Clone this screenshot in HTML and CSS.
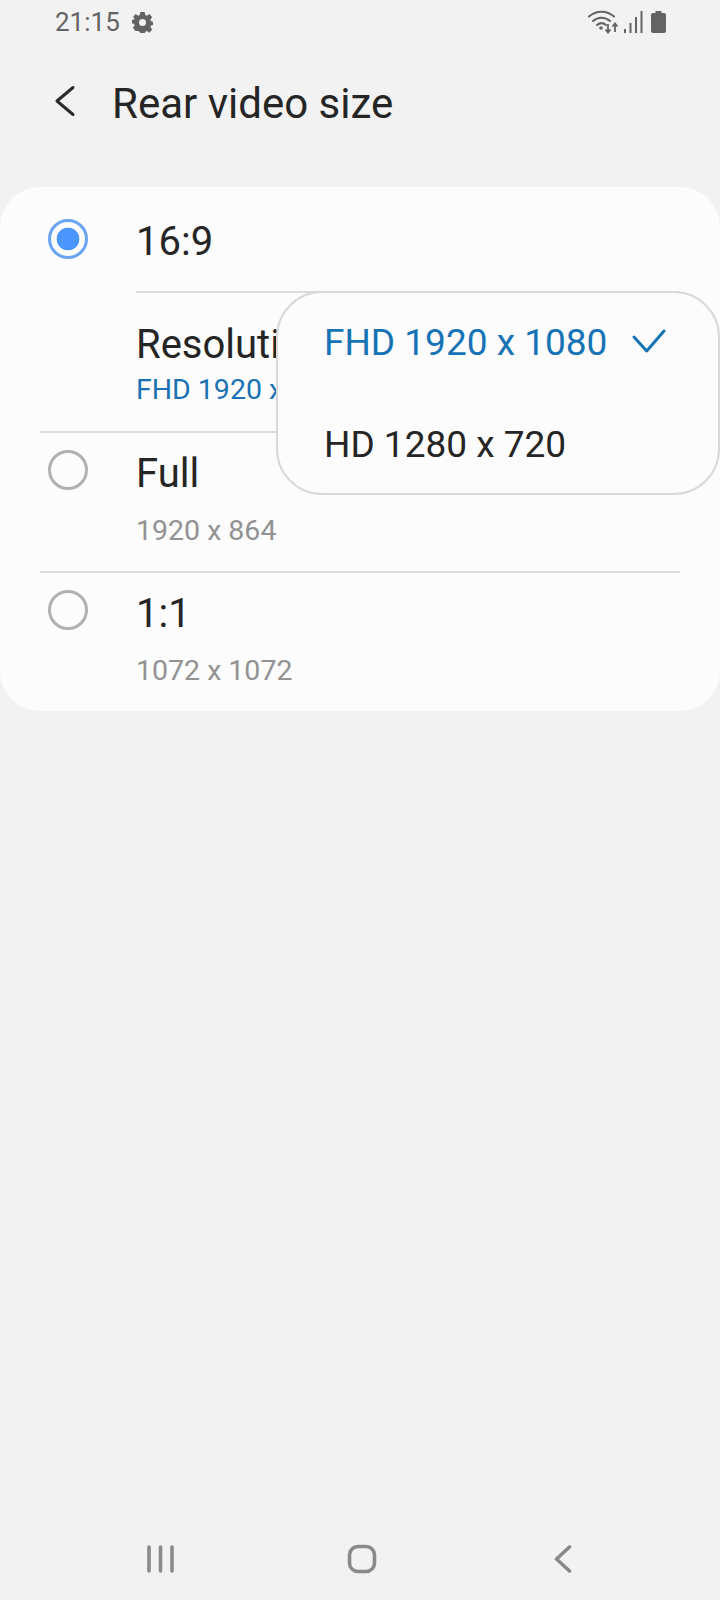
FILE: index.html
```html
<!DOCTYPE html>
<html lang="en">
<head>
<meta charset="utf-8">
<title>Rear video size</title>
<link rel="stylesheet" href="styles.css">
</head>
<body>
<div class="screen">
  <div class="status">
    <div class="status-left">
      <span class="time">21:15</span>
      <svg class="gear" viewBox="0 0 24 24"><path fill="#636363" fill-rule="evenodd" d="M9.500 0h5l.7 3.400 1.900.8L20 2.300 23 6l-2 2.800.8 1.900 2.200.5v3.600l-2.200.5-.8 1.900 2 2.800-3 3.700-2.900-1.900-1.900.8-.7 2.100h-5l-.7-2.100-1.900-.8L4 21.700 1 18l2-2.800-.8-1.900L0 12.800V9.200l2.200-.5.800-1.900L1 6l3-3.700 2.900 1.900 1.900-.8zM12 8a4 4 0 1 0 0 8 4 4 0 0 0 0-8z"/></svg>
    </div>
    <div class="status-right">
      <svg class="wifi" viewBox="0 0 30 24"><g fill="none" stroke="#636363" stroke-width="2" stroke-linecap="round"><path d="M1 6.500C8 0 19 0 26 6.500"/><path d="M5 11c5-4.500 12-4.500 17 0"/><path d="M9 15c3-2.500 6-2.500 9 0"/></g><circle cx="13" cy="18" r="1.800" fill="#636363"/><path stroke="#636363" stroke-width="1.800" fill="none" d="M20 14v8M17.500 19.500l2.500 3 2.500-3M27 22v-8M24.500 16.500l2.500-3 2.500 3"/></svg>
      <svg class="signal" viewBox="0 0 20 24"><g stroke="#636363" stroke-width="2"><path d="M2 23v-4M7.500 23V13M13 23V7M18.500 23V1" /></g></svg>
      <svg class="battery" viewBox="0 0 15 22"><path fill="#636363" d="M4.500 0h6v2H13a2 2 0 0 1 2 2v16a2 2 0 0 1-2 2H2a2 2 0 0 1-2-2V4a2 2 0 0 1 2-2h2.500z"/></svg>
    </div>
  </div>

  <header class="appbar">
    <svg class="back" viewBox="0 0 22 32"><path d="M19 2.500 3 16l16 13.500" fill="none" stroke="#2a2a2a" stroke-width="3" stroke-linecap="round" stroke-linejoin="round"/></svg>
    <h1 class="title">Rear video size</h1>
  </header>

  <main class="card">
    <div class="option option-first">
      <span class="radio radio-on"></span>
      <div class="option-body"><div class="label label-first">16:9</div></div>
    </div>
    <div class="resolution-row">
      <div class="label label-res">Resolution</div>
      <div class="sub sub-blue">FHD 1920 x 1080</div>
    </div>
    <div class="option">
      <span class="radio"></span>
      <div class="option-body">
        <div class="label">Full</div>
        <div class="sub">1920 x 864</div>
      </div>
    </div>
    <div class="option option-last">
      <span class="radio"></span>
      <div class="option-body">
        <div class="label">1:1</div>
        <div class="sub">1072 x 1072</div>
      </div>
    </div>

    <div class="popup">
      <div class="popup-item popup-selected">
        <span>FHD 1920 x 1080</span>
        <svg class="check" viewBox="0 0 34 24"><path d="M2 8 14.700 22 32 2" fill="none" stroke="#1673b5" stroke-width="3" stroke-linecap="round" stroke-linejoin="round"/></svg>
      </div>
      <div class="popup-item">HD 1280 x 720</div>
    </div>
  </main>

  <nav class="navbar">
    <svg class="nav-recents" viewBox="0 0 27 28"><g stroke="#8a8a8a" stroke-width="3.600" stroke-linecap="round"><path d="M2 2v24M13.500 2v24M25 2v24"/></g></svg>
    <svg class="nav-home" viewBox="0 0 30 30"><rect x="2.500" y="2.500" width="25" height="25" rx="8.500" fill="none" stroke="#8a8a8a" stroke-width="3.600"/></svg>
    <svg class="nav-back" viewBox="0 0 18 28"><path d="M15.500 2 2.500 14l13 12" fill="none" stroke="#8a8a8a" stroke-width="3.600" stroke-linecap="round" stroke-linejoin="round"/></svg>
  </nav>
</div>
</body>
</html>
```
FILE: styles.css
```css
* { box-sizing: border-box; }
html, body { margin: 0; padding: 0; }
body {
  background: #f2f2f2;
  font-family: Roboto, "Liberation Sans", sans-serif;
  color: #252525;
}
.screen {
  width: 720px;
  height: 1600px;
  display: flex;
  flex-direction: column;
  overflow: hidden;
}
.status {
  height: 44px;
  padding: 0 54px 0 55px;
  display: flex;
  justify-content: space-between;
  align-items: center;
}
.status-left, .status-right { display: flex; align-items: center; }
.time {
  font-size: 26px;
  color: #636363;
}
.gear { width: 21px; height: 21px; margin-left: 12px; }
.wifi { width: 30px; height: 24px; }
.signal { width: 20px; height: 24px; margin-left: 5px; }
.battery { width: 15px; height: 22px; margin-left: 8px; }
.appbar {
  height: 143px;
  padding: 13px 0 0 54px;
  display: flex;
  align-items: flex-start;
}
.back { width: 22px; height: 32px; margin-top: 28px; }
.title {
  margin: 25px 0 0 36px;
  font-size: 42px;
  line-height: 44px;
  font-weight: 400;
  color: #252525;
}
.card {
  position: relative;
  height: 524px;
  background: #fcfcfc;
  border-radius: 40px;
}
.option {
  height: 140px;
  margin: 0 40px;
  padding-left: 8px;
  display: flex;
  align-items: flex-start;
  border-bottom: 2px solid #dcdcdc;
}
.option-first {
  height: 105px;
  border-bottom: 0;
}
.option-last { border-bottom: 0; height: 138px; }
.radio {
  flex: none;
  width: 40px;
  height: 40px;
  margin-top: 17px;
  border-radius: 50%;
  border: 3px solid #b1b1b1;
  background: #fcfcfc;
}
.option-first .radio { margin-top: 32px; }
.radio-on {
  border-color: #6aa5f4;
  background: radial-gradient(circle, #4b96ff 0 11px, #fcfcfc 11.700px);
}
.option-body { margin-left: 48px; }
.label {
  font-size: 40px;
  line-height: 42px;
  margin-top: 20px;
  color: #252525;
}
.label-first { margin-top: 34px; }
.sub {
  margin-top: 19px;
  font-size: 28.500px;
  line-height: 34px;
  color: #929292;
}
.sub-blue { margin-top: 7px; color: #1a72b4; }
.resolution-row {
  height: 141px;
  margin: 0 40px;
  padding: 32px 0 0 96px;
  border-bottom: 2px solid #dcdcdc;
  position: relative;
}
.resolution-row::before {
  content: "";
  position: absolute;
  top: -1px;
  left: 96px;
  right: 0;
  border-top: 2px solid #dcdcdc;
}
.label-res { margin-top: 0; }
.popup {
  position: absolute;
  top: 104px;
  right: 0;
  width: 444px;
  height: 204px;
  background: #fcfcfc;
  border: 2px solid #d9d9d9;
  border-radius: 46px;
  padding: 1px 46px 0;
  display: flex;
  flex-direction: column;
  gap: 4px;
}
.popup-item {
  height: 99px;
  display: flex;
  align-items: center;
  justify-content: space-between;
  font-size: 37px;
  color: #252525;
}
.popup-selected { color: #1673b5; }
.check { width: 34px; height: 24px; margin: 0 6px 4px 0; }
.navbar {
  margin-top: auto;
  height: 82px;
  display: flex;
  align-items: center;
}
.nav-recents { width: 27px; height: 28px; margin-left: 147px; }
.nav-home { width: 30px; height: 30px; margin-left: 173px; }
.nav-back { width: 18px; height: 28px; margin-left: 177px; }
```
